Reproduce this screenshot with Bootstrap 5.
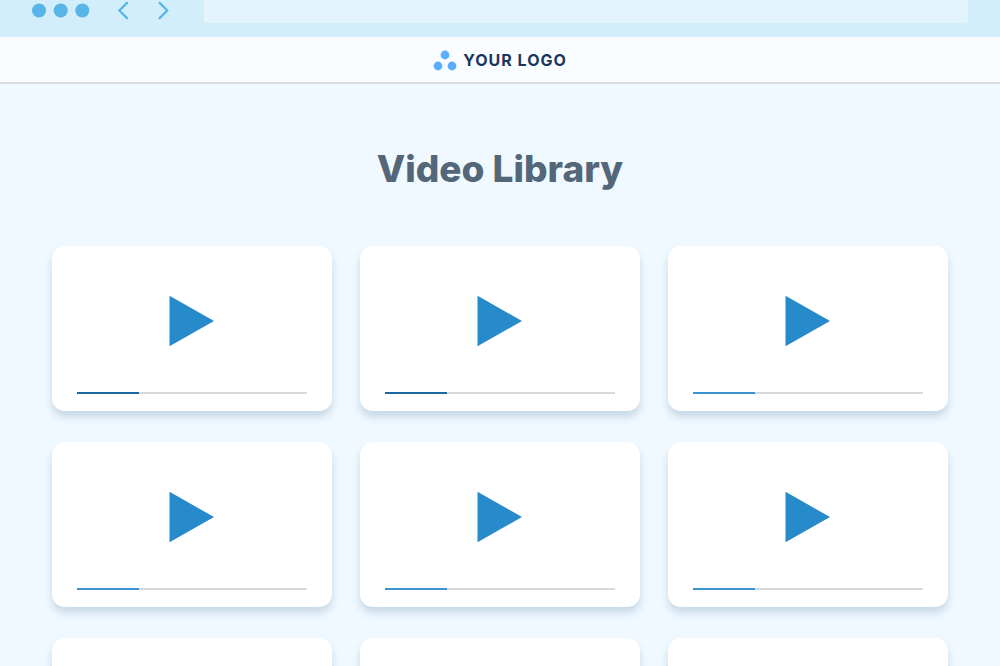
<!DOCTYPE html>
<html lang="en">
<head>
<meta charset="utf-8">
<meta name="viewport" content="width=device-width, initial-scale=1">
<title>Video Library</title>
<link rel="stylesheet" href="https://cdn.jsdelivr.net/npm/bootstrap@5.3.0/dist/css/bootstrap.min.css">
<style>
  body { background: #f0f9ff; font-family: Inter, "Liberation Sans", sans-serif; }
  .browser-bar { background: #d2eefb; padding: 0 32px 14px; }
  .browser-bar svg, .brand svg, .play svg { display: block; }
  .nav-arrows { margin-left: 28px; gap: 29px; }
  .address { height: 23px; margin-left: 35px; background: #e3f4fc; border-radius: 0 0 3px 3px; min-width: 0; }
  .site-header { height: 47px; background: #fafdff; border-bottom: 2px solid #d5dde2; }
  .brand { color: #1b3561; font-size: 16px; font-weight: 700; letter-spacing: 1px; line-height: 20px; gap: 6px; }
  .page-title { color: #546779; font-size: 37px; font-weight: 800; line-height: 48px; margin: 61px 0 53px; }
  .library { padding: 0 52px 32px; }
  .video-grid { display: grid; grid-template-columns: repeat(3, 1fr); gap: 31px 28px; }
  .video { border-radius: 13px; padding: 49px 25px 17px; box-shadow: 0 6px 9px #c6d8e6; }
  .play { line-height: 0; }
  .progress.track { width: 100%; height: 2px; margin-top: 45px; background: #d5dadd; border-radius: 0; }
  .track .progress-bar { background: #3c93d0; }
  .track .seen { background: #1d679e; }
</style>
</head>
<body class="vh-100 overflow-hidden">
<div class="browser-bar d-flex align-items-center">
  <svg width="58" height="22" viewBox="0 0 58 22" fill="#58b5e7" aria-hidden="true"><circle cx="7" cy="9.5" r="7"/><circle cx="28.7" cy="9.5" r="7"/><circle cx="50.3" cy="9.5" r="7"/></svg>
  <nav class="nav-arrows d-flex" aria-label="Browser history">
    <button type="button" class="btn p-0 border-0" aria-label="Back"><svg width="11" height="22" viewBox="0 0 11 22" fill="none" stroke="#58b5e7" stroke-width="2.3" stroke-linecap="round" stroke-linejoin="round"><path d="M9 1.9 1.3 9.5 9 17.1"/></svg></button>
    <button type="button" class="btn p-0 border-0" aria-label="Forward"><svg width="11" height="22" viewBox="0 0 11 22" fill="none" stroke="#58b5e7" stroke-width="2.3" stroke-linecap="round" stroke-linejoin="round"><path d="m1.6 1.9 7.7 7.6-7.7 7.6"/></svg></button>
  </nav>
  <input type="text" class="address border-0 flex-fill" aria-label="Address">
</div>
<header class="site-header d-flex justify-content-center align-items-center">
  <a href="#" class="brand d-flex align-items-center text-decoration-none">
    <svg width="24" height="22" viewBox="0 0 24 22" fill="#5aadfb" aria-hidden="true"><circle cx="12" cy="6" r="4.4"/><circle cx="5" cy="17" r="4.4"/><circle cx="19" cy="17" r="4.4"/></svg>
    <span>YOUR LOGO</span>
  </a>
</header>
<main class="library">
  <h1 class="page-title text-center">Video Library</h1>
  <div class="video-grid" id="videos"></div>
</main>
<template id="video-card">
  <article class="video bg-white d-flex flex-column align-items-center">
    <button type="button" class="play btn p-0 border-0 rounded-0" aria-label="Play video"><svg width="46" height="52" viewBox="0 0 46 52" fill="#278acb"><path d="M.5.8 45 26 .5 51.2z"/></svg></button>
    <div class="progress track" role="progressbar" aria-label="Watched" aria-valuenow="27" aria-valuemin="0" aria-valuemax="100"><div class="progress-bar"></div></div>
  </article>
</template>
<script src="https://cdn.jsdelivr.net/npm/bootstrap@5.3.0/dist/js/bootstrap.bundle.min.js"></script>
<script>
  const videos = [
    { watched: 27, seen: true }, { watched: 27, seen: true }, { watched: 27 },
    { watched: 27 }, { watched: 27 }, { watched: 27 },
    { watched: 27 }, { watched: 27 }, { watched: 27 }
  ];
  const grid = document.getElementById('videos');
  const template = document.getElementById('video-card');
  for (const video of videos) {
    const card = template.content.cloneNode(true);
    const bar = card.querySelector('.progress-bar');
    bar.style.width = video.watched + '%';
    if (video.seen) bar.classList.add('seen');
    grid.append(card);
  }
</script>
</body>
</html>
